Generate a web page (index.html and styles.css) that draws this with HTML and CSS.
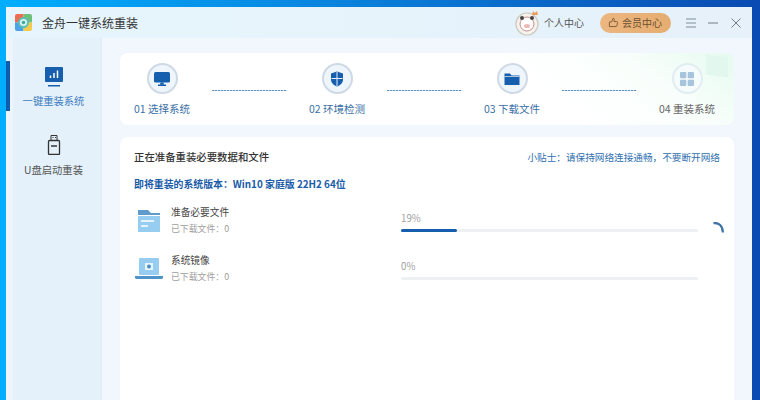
FILE: index.html
```html
<!DOCTYPE html>
<html lang="zh-CN">
<head>
    <meta charset="UTF-8">
    <title>金舟一键系统重装</title>
    <link rel="stylesheet" href="styles.css">
</head>
<body>
    <div class="window">
        <header class="titlebar">
            <svg class="logo" viewBox="0 0 17 17">
                <rect width="8.500" height="8.500" fill="#ef6b4f"/>
                <rect x="8.500" width="8.500" height="8.500" fill="#6cc07a"/>
                <rect y="8.500" width="8.500" height="8.500" fill="#4aa3e8"/>
                <rect x="8.500" y="8.500" width="8.500" height="8.500" fill="#f6cb4c"/>
                <circle cx="8.500" cy="8.500" r="5.500" fill="#58c0b4"/>
                <circle cx="8.500" cy="8.500" r="3.600" fill="#d8f1ee"/>
                <circle cx="8.500" cy="8.500" r="1.700" fill="#3da99c"/>
            </svg>
            <span class="app-name">金舟一键系统重装</span>
            <div class="title-right">
                <svg class="avatar" viewBox="0 0 26 26">
                    <circle cx="12" cy="14" r="11" fill="#f6f3ee" stroke="#cfc8be" stroke-width="1.200"/>
                    <circle cx="12" cy="14" r="7" fill="#fff" stroke="#c98f8f"/>
                    <circle cx="7" cy="8" r="2" fill="#444"/>
                    <circle cx="17" cy="8" r="2" fill="#444"/>
                    <ellipse cx="12" cy="16" rx="3" ry="2" fill="#eeb9b4"/>
                    <path d="M17 5l1-4 2 2 2-2 1 4z" fill="#ef9a5a"/>
                </svg>
                <span class="user-link">个人中心</span>
                <button class="vip-btn">
                    <svg class="vip-icon" viewBox="0 0 12 12"><path d="M1.500 5.500h2.300l1.700-4c1 0 1.500.7 1.300 1.700l-.3 1.800h3c.6 0 1 .5.9 1.100l-.7 3.400c-.1.500-.5.900-1 .900H1.500z" fill="none" stroke="#7a5a34" stroke-width="1"/></svg>
                    会员中心
                </button>
                <svg class="win-icon menu-icon" viewBox="0 0 10 10"><path d="M0 1h10M0 5h10M0 9h10" stroke="#7f8c99" stroke-width="1"/></svg>
                <svg class="win-icon min-icon" viewBox="0 0 10 10"><path d="M0 5h10" stroke="#6f7c89" stroke-width="1"/></svg>
                <svg class="win-icon close-icon" viewBox="0 0 10 10"><path d="M.5.5l9 9M9.500.5l-9 9" stroke="#6f7c89" stroke-width="1"/></svg>
            </div>
        </header>

        <div class="content">
            <nav class="sidebar">
                <div class="nav-item active">
                    <svg class="nav-icon" viewBox="0 0 18 20">
                        <rect width="18" height="15" rx="1" fill="#155fae"/>
                        <path d="M5.500 11V8.500M9 11V6M12.500 11V3.500" stroke="#fff" stroke-width="1.500"/>
                        <rect x="3" y="18" width="12" height="1.500" fill="#155fae"/>
                    </svg>
                    <span>一键重装系统</span>
                </div>
                <div class="nav-item">
                    <svg class="nav-icon" viewBox="0 0 18 20">
                        <path d="M6 .5h6v5H6z" fill="none" stroke="#333" stroke-width="1"/>
                        <rect x="3.500" y="5.500" width="11" height="14" rx="1" fill="none" stroke="#333" stroke-width="1.300"/>
                        <path d="M6 11h6" stroke="#333" stroke-width="1.500"/>
                        <path d="M7.500 2.500h1M10 2.500h1" stroke="#333"/>
                    </svg>
                    <span>U盘启动重装</span>
                </div>
            </nav>

            <main class="main">
                <section class="card steps">
                    <div class="step">
                        <div class="step-circle">
                            <svg viewBox="0 0 16 16" class="step-icon">
                                <rect y="1" width="16" height="10.500" rx="1.500" fill="#155fae"/>
                                <path d="M6.500 11.500h3l.5 2.200H6z" fill="#155fae"/>
                                <rect x="4" y="13.500" width="8" height="1.500" fill="#155fae"/>
                            </svg>
                        </div>
                        <span class="step-label">01 选择系统</span>
                    </div>
                    <div class="step-line"></div>
                    <div class="step">
                        <div class="step-circle">
                            <svg viewBox="0 0 16 16" class="step-icon">
                                <path d="M8 .5l6 2v6c0 3.500-3 6-6 7-3-1-6-3.500-6-7v-6z" fill="#155fae"/>
                                <path d="M8 1v14M2.500 7.500h11" stroke="#e6f1fa" stroke-width="1"/>
                            </svg>
                        </div>
                        <span class="step-label">02 环境检测</span>
                    </div>
                    <div class="step-line"></div>
                    <div class="step">
                        <div class="step-circle">
                            <svg viewBox="0 0 16 16" class="step-icon">
                                <path d="M.5 2.500h5.500l1.500 2h8v9.500H.5z" fill="#155fae"/>
                                <path d="M.5 5.500h15" stroke="#e6f1fa" stroke-width=".7"/>
                            </svg>
                        </div>
                        <span class="step-label">03 下载文件</span>
                    </div>
                    <div class="step-line"></div>
                    <div class="step todo">
                        <div class="step-circle">
                            <svg viewBox="0 0 16 16" class="step-icon">
                                <rect x="1" y="1" width="6.300" height="6.300" rx="1" fill="#a6c4dc"/>
                                <rect x="8.700" y="1" width="6.300" height="6.300" rx="1" fill="#a6c4dc"/>
                                <rect x="1" y="8.700" width="6.300" height="6.300" rx="1" fill="#a6c4dc"/>
                                <rect x="8.700" y="8.700" width="6.300" height="6.300" rx="1" fill="#a6c4dc"/>
                            </svg>
                        </div>
                        <span class="step-label">04 重装系统</span>
                    </div>
                </section>

                <section class="card detail">
                    <div class="detail-head">
                        <h2>正在准备重装必要数据和文件</h2>
                        <span class="tip">小贴士：请保持网络连接通畅，不要断开网络</span>
                    </div>
                    <p class="version">即将重装的系统版本：Win10 家庭版 22H2 64位</p>

                    <div class="task">
                        <svg class="task-icon" viewBox="0 0 28 28">
                            <path d="M3 3h10l3 3h9v2H3z" fill="#5d9ccb"/>
                            <rect x="3" y="9" width="22" height="16" fill="#97cdf0"/>
                            <path d="M6 14h13M6 19h7" stroke="#fff" stroke-width="1.500"/>
                        </svg>
                        <div class="task-text">
                            <div class="task-name">准备必要文件</div>
                            <div class="task-sub">已下载文件：0</div>
                        </div>
                        <div class="task-progress">
                            <div class="pct">19%</div>
                            <div class="bar"><div class="bar-fill" style="width: 19%"></div></div>
                        </div>
                        <svg class="spinner" viewBox="0 0 11 11"><path d="M.5 1.200c5-1 9.500 2.800 9.300 9.300" fill="none" stroke="#3f74a6" stroke-width="2.200"/></svg>
                    </div>

                    <div class="task">
                        <svg class="task-icon" viewBox="0 0 28 28">
                            <rect x="4" y="3" width="20" height="17" rx="1" fill="#97cdf0"/>
                            <rect x="10" y="8" width="8" height="7" fill="#e8f5fd"/>
                            <circle cx="14" cy="11.500" r="2" fill="#4a8fc4"/>
                            <path d="M0 21h28v1.500c0 1-1 1.500-2 1.500H2c-1 0-2-.5-2-1.500z" fill="#4f94c9"/>
                        </svg>
                        <div class="task-text">
                            <div class="task-name">系统镜像</div>
                            <div class="task-sub">已下载文件：0</div>
                        </div>
                        <div class="task-progress">
                            <div class="pct">0%</div>
                            <div class="bar"></div>
                        </div>
                    </div>
                </section>
            </main>
        </div>
    </div>
</body>
</html>
```

FILE: styles.css
```css
* {
    box-sizing: border-box;
}
html, body {
    height: 100%;
}
body {
    margin: 0;
    padding: 7px 8px 0 6px;
    overflow: hidden;
    font-family: "Noto Sans CJK SC", "Liberation Sans", sans-serif;
    background: linear-gradient(90deg, #00aeff 0%, #0a82dc 45%, #0a4ab2 100%);
}
.window {
    height: 393px;
    display: flex;
    flex-direction: column;
    background-color: #f2f7fd;
}
.titlebar {
    height: 31px;
    flex: none;
    display: flex;
    align-items: center;
    padding: 0 11px 0 9px;
    background: linear-gradient(90deg, #e6f5fd, #e6f1fa);
}
.logo {
    width: 17px;
    height: 17px;
    border-radius: 2px;
}
.app-name {
    margin-left: 10px;
    font-size: 12px;
    color: #333;
}
.title-right {
    margin-left: auto;
    display: flex;
    align-items: center;
}
.avatar {
    width: 26px;
    height: 26px;
}
.user-link {
    margin-left: 3px;
    font-size: 10px;
    color: #555;
}
.vip-btn {
    width: 71px;
    height: 20px;
    margin-left: 16px;
    padding: 0 0 0 8px;
    display: flex;
    align-items: center;
    gap: 2px;
    border: none;
    border-radius: 10px;
    font-family: inherit;
    font-size: 10px;
    color: #6b5030;
    background: linear-gradient(90deg, #ecb680, #e6ad70);
}
.vip-icon {
    width: 11px;
    height: 11px;
    margin-right: 1px;
}
.win-icon {
    width: 10px;
    height: 10px;
    margin-left: 12px;
}
.menu-icon {
    margin-left: 15px;
}
.close-icon {
    margin-left: 13px;
}
.content {
    flex: 1;
    display: flex;
    min-height: 0;
}
.sidebar {
    width: 96px;
    flex: none;
    background: linear-gradient(90deg, #edf5fa 7px, #e4f1fb 7px, #e4f1fb 94px, #e0edf9 94px);
}
.nav-item {
    height: 50px;
    margin-top: 23px;
    display: flex;
    flex-direction: column;
    align-items: center;
    border-left: 4px solid transparent;
    padding-right: 5px;
    font-size: 10.300px;
    color: #555;
}
.nav-item.active {
    margin-bottom: 24px;
    padding-top: 6px;
    border-left-color: #0f5cad;
    color: #3f7fc0;
}
.nav-item span {
    margin-top: 8px;
    line-height: 14px;
}
.nav-item.active span {
    margin-top: 7px;
}
.nav-icon {
    width: 18px;
    height: 20px;
    flex: none;
}
.main {
    flex: 1;
    min-width: 0;
    display: flex;
    flex-direction: column;
    gap: 12px;
    padding: 15px 18px 0;
}
.card {
    background-color: #fff;
    border-radius: 8px;
}
.steps {
    position: relative;
    height: 72px;
    flex: none;
    display: flex;
    padding: 10px 14px 0;
    background: linear-gradient(215deg, #e6faf1 0%, #f8fefb 16%, #fff 34%);
}
.steps::after {
    content: "";
    position: absolute;
    top: 3px;
    right: 6px;
    width: 22px;
    height: 20px;
    background-color: #e2f8ef;
    transform: skewY(8deg);
}
.step {
    width: 56px;
    flex: none;
    display: flex;
    flex-direction: column;
    align-items: center;
}
.step-circle {
    width: 31px;
    height: 31px;
    display: flex;
    align-items: center;
    justify-content: center;
    border: 2px solid #cfd9e6;
    border-radius: 50%;
    background-color: #eef5fb;
}
.step-icon {
    width: 16px;
    height: 16px;
}
.step-label {
    margin-top: 7px;
    font-size: 10.500px;
    line-height: 15px;
    white-space: nowrap;
    color: #3b6fa6;
}
.todo .step-circle {
    border-color: #e2edf1;
    background-color: #f6fbfb;
}
.todo .step-label {
    color: #666;
}
.step-line {
    width: 75px;
    height: 1px;
    margin: 27px 22px 0;
    flex: none;
    background: repeating-linear-gradient(90deg, #5f93c6 0 2px, #c9dcee 2px 3px);
}
.detail {
    flex: 1;
    padding: 0 14px;
    border-radius: 8px 8px 0 0;
}
.detail-head {
    display: flex;
    justify-content: space-between;
    align-items: center;
    padding-top: 11px;
}
.detail-head h2 {
    margin: 0;
    font-size: 10.400px;
    font-weight: 500;
    line-height: 18px;
    color: #333;
}
.tip {
    font-size: 9.650px;
    color: #2f6fb0;
}
.version {
    margin: 9px 0 11px;
    font-size: 9.900px;
    font-weight: 700;
    line-height: 18px;
    color: #1a5ca8;
}
.task {
    height: 48px;
    display: flex;
}
.task-icon {
    width: 28px;
    height: 28px;
    margin: 3px 0 0 1px;
    flex: none;
}
.task-text {
    width: 230px;
    margin-left: 8px;
    flex: none;
}
.task-name {
    font-size: 9.700px;
    line-height: 16px;
    color: #444;
}
.task-sub {
    margin-top: 1px;
    font-size: 8.900px;
    line-height: 16px;
    color: #a0a0a0;
}
.task-progress {
    width: 297px;
    flex: none;
    padding-top: 6px;
}
.pct {
    font-size: 9.700px;
    line-height: 16px;
    color: #a0a0a0;
}
.bar {
    height: 3px;
    margin-top: 3px;
    border-radius: 2px;
    background-color: #eff0f2;
}
.bar-fill {
    height: 100%;
    border-radius: 2px;
    background-color: #155fae;
}
.spinner {
    width: 11px;
    height: 11px;
    margin: 18px 0 0 15px;
    flex: none;
}
```
